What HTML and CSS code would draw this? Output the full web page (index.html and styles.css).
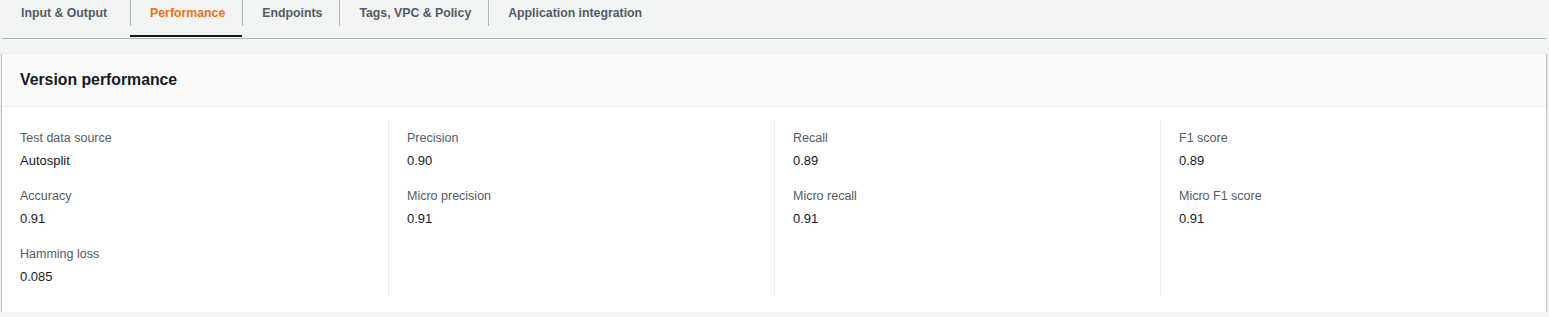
FILE: index.html
```html
<!DOCTYPE html>
<html lang="en">
<head>
<meta charset="utf-8">
<title>Version performance</title>
<link rel="stylesheet" href="styles.css">
</head>
<body>
<div class="page">
  <nav class="tabs">
    <a class="tab"><span class="tab-label">Input &amp; Output</span></a>
    <a class="tab tab-active"><span class="tab-label">Performance</span></a>
    <a class="tab"><span class="tab-label">Endpoints</span></a>
    <a class="tab"><span class="tab-label">Tags, VPC &amp; Policy</span></a>
    <a class="tab"><span class="tab-label">Application integration</span></a>
  </nav>
  <section class="card">
    <header class="card-header"><h2 class="card-title">Version performance</h2></header>
    <div class="card-body">
      <div class="col">
        <div class="item"><div class="label">Test data source</div><div class="value">Autosplit</div></div>
        <div class="item"><div class="label">Accuracy</div><div class="value">0.91</div></div>
        <div class="item"><div class="label">Hamming loss</div><div class="value">0.085</div></div>
      </div>
      <div class="col">
        <div class="item"><div class="label">Precision</div><div class="value">0.90</div></div>
        <div class="item"><div class="label">Micro precision</div><div class="value">0.91</div></div>
      </div>
      <div class="col">
        <div class="item"><div class="label">Recall</div><div class="value">0.89</div></div>
        <div class="item"><div class="label">Micro recall</div><div class="value">0.91</div></div>
      </div>
      <div class="col">
        <div class="item"><div class="label">F1 score</div><div class="value">0.89</div></div>
        <div class="item"><div class="label">Micro F1 score</div><div class="value">0.91</div></div>
      </div>
    </div>
  </section>
</div>
</body>
</html>
```
FILE: styles.css
```css
html, body {
  margin: 0;
  padding: 0;
  background: #f2f3f3;
}
body {
  font-family: "Liberation Sans", Arial, sans-serif;
  color: #16191f;
}
.page {
  padding: 0 3px 0 2px;
}
.tabs {
  display: flex;
  border-bottom: 1px solid #aab7b8;
  padding-bottom: 1px;
}
.tab {
  display: block;
  padding-bottom: 9px;
  border-bottom: 2px solid transparent;
  cursor: pointer;
}
.tab-label {
  display: block;
  height: 25px;
  padding-top: 1px;
  line-height: 24px;
  padding-left: 19px;
  padding-right: 17px;
  font-size: 12.3px;
  font-weight: bold;
  color: #545b64;
  white-space: nowrap;
}
.tab:first-child .tab-label {
  padding-right: 23px;
}
.tab + .tab .tab-label {
  border-left: 1px solid #aab7b8;
}
.tab-active {
  border-bottom-color: #16191f;
}
.tab-active .tab-label {
  color: #ec7211;
}
.card {
  margin-top: 14px;
  background: #fff;
  border-top: 1px solid #eaeded;
  box-shadow: 0 1px 1px 0 rgba(0, 28, 36, 0.4), 1px 1px 1px 0 rgba(0, 28, 36, 0.15), -1px 1px 1px 0 rgba(0, 28, 36, 0.15);
}
.card-header {
  background: #fafafa;
  border-bottom: 1px solid #eaeded;
  padding: 15px 18px 15px;
}
.card-title {
  margin: 0;
  font-size: 15.8px;
  line-height: 22px;
  font-weight: bold;
  color: #16191f;
}
.card-body {
  display: grid;
  grid-template-columns: repeat(4, 1fr);
  padding: 13px 0 17px;
}
.col {
  padding: 8px 0 7px 18px;
}
.col + .col {
  border-left: 1px solid #eaeded;
  padding-left: 18px;
}
.item {
  margin-bottom: 14px;
}
.item:last-child {
  margin-bottom: 0;
}
.label {
  font-size: 12.5px;
  line-height: 20px;
  color: #545b64;
}
.value {
  margin-top: 2px;
  font-size: 13px;
  line-height: 22px;
  color: #16191f;
}
```
